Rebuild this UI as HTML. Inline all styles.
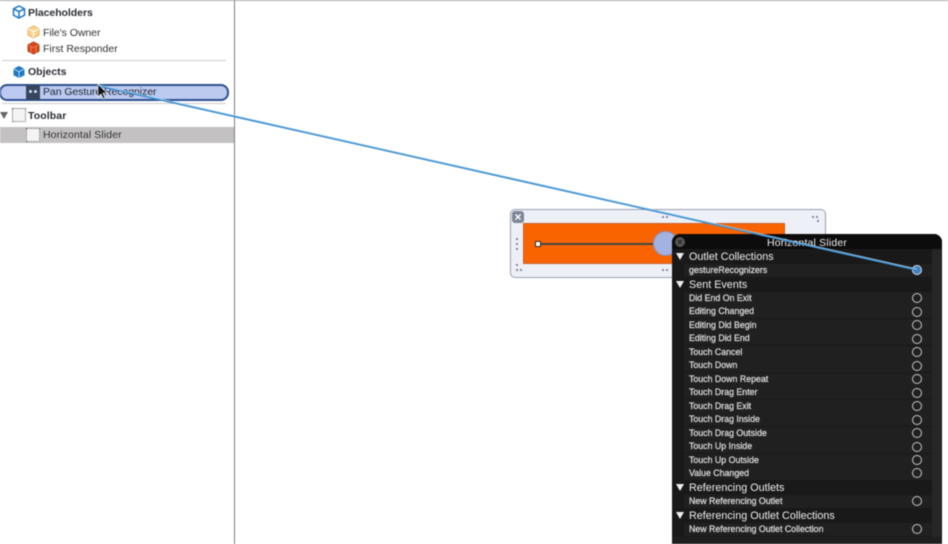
<!DOCTYPE html>
<html><head><meta charset="utf-8"><style>
html,body{margin:0;padding:0;background:#fff}
#p{position:relative;width:948px;height:544px;overflow:hidden;background:#fff;font-family:"Liberation Sans",sans-serif;filter:blur(.4px)}
#p div{position:absolute;box-sizing:border-box}
.t{white-space:nowrap;color:#333;font-size:10.5px;line-height:14px;letter-spacing:0}
.h{font-weight:bold;font-size:10.5px;color:#2a2d33}
.s{left:689px;white-space:nowrap;color:#ddd;font-size:8.8px;line-height:12px;-webkit-text-stroke:.25px #ddd}
.g{left:689px;margin-top:1px;white-space:nowrap;color:#eee;font-size:10.8px;line-height:14px}
.r{left:684px;width:248px;height:12.5px;background:#202020}
.c{left:912px;width:10px;height:10px;border:1.2px solid #c8c8c8;border-radius:50%}
.a{left:676px;width:0;height:0;border-left:4px solid transparent;border-right:4px solid transparent;border-top:7px solid #eee}
.ic{width:14px;height:14px;background:#f4f4f4;border:1px dotted #666}
</style></head><body><div id="p">
<div style="left:0;top:0;width:948px;height:1px;background:#aaa"></div>
<div style="left:234px;top:0;width:1px;height:544px;background:#7c7c7c"></div>

<svg style="position:absolute;left:12px;top:5px" width="14" height="14" viewBox="0 0 14 14"><path d="M7 1 12.500 3.800V10.200L7 13 1.500 10.200V3.800Z M1.500 3.800 7 6.600 12.500 3.800 M7 6.600V13" fill="#fff" stroke="#1f78c4" stroke-width="1.500"/></svg>
<div class="t h" style="left:28px;top:6px;letter-spacing:-.05px">Placeholders</div>
<svg style="position:absolute;left:27px;top:25px" width="13" height="14" viewBox="0 0 13 14"><path d="M6.500 1 12 3.800V10.200L6.500 13 1 10.200V3.800Z" fill="#fbd28e" stroke="#e9b163"/><path d="M1 3.800 6.500 6.600 12 3.800M6.500 6.600V13" fill="none" stroke="#fff" stroke-width="1"/></svg>
<div class="t" style="left:43px;top:26px;letter-spacing:-.05px">File's Owner</div>
<svg style="position:absolute;left:27px;top:41px" width="13" height="14" viewBox="0 0 13 14"><path d="M6.500 1 12 3.800V10.200L6.500 13 1 10.200V3.800Z" fill="#d9481c" stroke="#b53a14"/><path d="M1 3.800 6.500 6.600 12 3.800M4 6V12M9 6V12" fill="none" stroke="#f08a5a" stroke-width=".8"/></svg>
<div class="t" style="left:43px;top:42px">First Responder</div>
<div style="left:2px;top:60px;width:224px;height:1px;background:#ccc"></div>
<svg style="position:absolute;left:12px;top:65px" width="14" height="14" viewBox="0 0 14 14"><path d="M7 1 12.500 3.800V10.200L7 13 1.500 10.200V3.800Z" fill="#1f78c4"/><path d="M1.500 3.800 7 6.600 12.500 3.800M7 6.600V13" fill="none" stroke="#bfe0f7" stroke-width=".9"/></svg>
<div class="t h" style="left:28px;top:65px">Objects</div>

<div style="left:-1px;top:84px;width:230px;height:17px;border:2px solid #2c4f8f;border-radius:8px;background:#bccaf0"></div>
<div style="left:26px;top:85px;width:14px;height:15px;background:#37465f"></div>
<div style="left:29px;top:90px;width:3px;height:3px;background:#d8e0ee;border-radius:50%"></div>
<div style="left:34px;top:90px;width:3px;height:3px;background:#d8e0ee;border-radius:50%"></div>
<div class="t" style="left:43px;top:85px;color:#1c2333;letter-spacing:-.07px">Pan Gesture Recognizer</div>

<div style="left:2px;top:103px;width:224px;height:1px;background:#ccc"></div>
<div style="left:0;top:112px;width:0;height:0;border-left:4px solid transparent;border-right:4px solid transparent;border-top:7px solid #666"></div>
<div class="ic" style="left:12px;top:108px"></div>
<div class="t h" style="left:28px;top:109px;letter-spacing:.1px">Toolbar</div>
<div style="left:0;top:127px;width:234px;height:16px;background:#c3c1c1"></div>
<div class="ic" style="left:26px;top:128px"></div>
<div class="t" style="left:43px;top:128px;letter-spacing:.1px">Horizontal Slider</div>

<!-- canvas object -->
<div style="left:510px;top:209px;width:316px;height:69px;background:#eef0f8;border:1px solid #98a0ae;border-radius:5px"></div>
<div style="left:512px;top:211px;width:12px;height:12px;background:#7d8798;border-radius:3px;color:#fff;font-size:12px;line-height:12px;text-align:center;font-weight:bold">×</div>
<div style="left:523px;top:223px;width:262px;height:41px;background:#f96400;border:1px solid #c9602a"></div>
<div style="left:537px;top:243px;width:130px;height:2px;background:#444"></div>
<div style="left:535px;top:241px;width:6px;height:6px;background:#fff;border:1px solid #333"></div>
<div style="left:653px;top:231px;width:25px;height:25px;border-radius:50%;background:#a3b2e1;border:1px solid #8792bd"></div>
<div style="left:662px;top:216px;width:8px;height:2px;background:repeating-linear-gradient(90deg,#889 0 2px,transparent 2px 4px)"></div>
<div style="left:812px;top:216px;width:8px;height:2px;background:repeating-linear-gradient(90deg,#889 0 2px,transparent 2px 4px)"></div>
<div style="left:817px;top:220px;width:2px;height:2px;background:#889"></div>
<div style="left:662px;top:269px;width:8px;height:2px;background:repeating-linear-gradient(90deg,#889 0 2px,transparent 2px 4px)"></div>
<div style="left:516px;top:269px;width:8px;height:2px;background:repeating-linear-gradient(90deg,#889 0 2px,transparent 2px 4px)"></div>
<div style="left:516px;top:264px;width:2px;height:2px;background:#889"></div>
<div style="left:516px;top:236px;width:2px;height:14px;background:repeating-linear-gradient(0deg,#889 0 2px,transparent 2px 5px)"></div>

<!-- HUD -->
<div style="left:672px;top:234px;width:270px;height:320px;background:#191919;border-radius:8px 8px 0 0"></div>
<div style="left:932px;top:249px;width:9px;height:295px;background:#262626"></div>
<div style="left:672px;top:537px;width:269px;height:7px;background:#1e1e1e"></div>
<div style="left:672px;top:234px;width:270px;height:15px;background:#0c0c0c;border-radius:8px 8px 0 0"></div>
<div style="left:675px;top:237px;width:10px;height:10px;border-radius:50%;background:#555;color:#222;font-size:9px;line-height:10px;text-align:center;font-weight:bold">×</div>
<div class="t" style="left:767px;top:236px;color:#eee;font-size:10.5px;letter-spacing:.18px">Horizontal Slider</div>

<div class="r" style="top:264px"></div>
<div class="r" style="top:292px"></div><div class="r" style="top:305px"></div><div class="r" style="top:319px"></div><div class="r" style="top:332px"></div><div class="r" style="top:346px"></div><div class="r" style="top:359px"></div><div class="r" style="top:373px"></div><div class="r" style="top:386px"></div><div class="r" style="top:400px"></div><div class="r" style="top:413px"></div><div class="r" style="top:427px"></div><div class="r" style="top:440px"></div><div class="r" style="top:454px"></div><div class="r" style="top:467px"></div>
<div class="r" style="top:495px"></div><div class="r" style="top:523px"></div>

<div class="a" style="top:253px"></div><div class="g" style="top:249px">Outlet Collections</div>
<div class="s" style="top:264px">gestureRecognizers</div>
<div class="a" style="top:281px"></div><div class="g" style="top:277px">Sent Events</div>
<div class="s" style="top:292px">Did End On Exit</div><div class="c" style="top:293px"></div>
<div class="s" style="top:305px">Editing Changed</div><div class="c" style="top:307px"></div>
<div class="s" style="top:319px">Editing Did Begin</div><div class="c" style="top:320px"></div>
<div class="s" style="top:332px">Editing Did End</div><div class="c" style="top:334px"></div>
<div class="s" style="top:346px">Touch Cancel</div><div class="c" style="top:347px"></div>
<div class="s" style="top:359px">Touch Down</div><div class="c" style="top:361px"></div>
<div class="s" style="top:373px">Touch Down Repeat</div><div class="c" style="top:374px"></div>
<div class="s" style="top:386px">Touch Drag Enter</div><div class="c" style="top:388px"></div>
<div class="s" style="top:400px">Touch Drag Exit</div><div class="c" style="top:401px"></div>
<div class="s" style="top:413px">Touch Drag Inside</div><div class="c" style="top:415px"></div>
<div class="s" style="top:427px">Touch Drag Outside</div><div class="c" style="top:428px"></div>
<div class="s" style="top:440px">Touch Up Inside</div><div class="c" style="top:442px"></div>
<div class="s" style="top:454px">Touch Up Outside</div><div class="c" style="top:455px"></div>
<div class="s" style="top:467px">Value Changed</div><div class="c" style="top:468px"></div>
<div class="a" style="top:484px"></div><div class="g" style="top:480px">Referencing Outlets</div>
<div class="s" style="top:495px">New Referencing Outlet</div><div class="c" style="top:496px"></div>
<div class="a" style="top:512px"></div><div class="g" style="top:508px">Referencing Outlet Collections</div>
<div class="s" style="top:523px">New Referencing Outlet Collection</div><div class="c" style="top:524px"></div>

<!-- connection -->
<div style="left:912px;top:265px;width:10px;height:10px;border-radius:50%;background:#3d7fc0;border:1.500px solid #dde"></div>
<svg style="position:absolute;left:0;top:0" width="948" height="544"><path d="M99 86 917 270" stroke="#3f8fd0" stroke-width="1.800" fill="none"/><path d="M99 85 917 269" stroke="#a9d6f0" stroke-width=".7" fill="none"/><path d="M98 84V97L101 94 103.500 99 105 98 103 93H107Z" fill="#111" stroke="#fff" stroke-width=".6"/></svg>
</div></body></html>
